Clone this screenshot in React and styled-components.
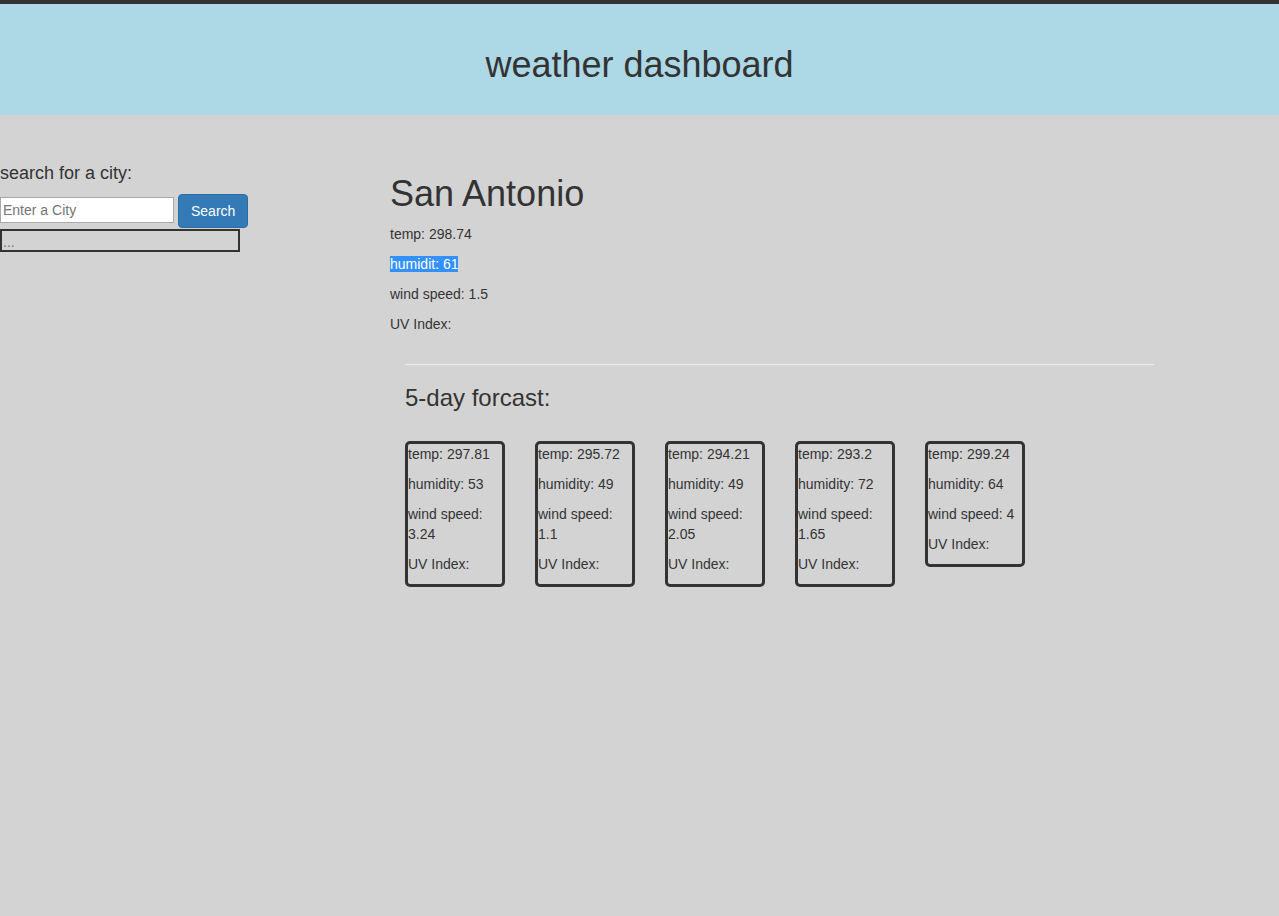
import React from "react";
import styled, { createGlobalStyle } from "styled-components";

const Global = createGlobalStyle`
  html, body { margin: 0; padding: 0; }
  body {
    background: #d3d3d3;
    color: #333;
    font-family: "Liberation Sans", Arial, sans-serif;
    font-size: 14px;
    line-height: 20px;
    border-top: 4px solid #333;
    min-height: 912px;
  }
  * { box-sizing: border-box; }
`;

const Header = styled.header`
  background: #add8e6;
  height: 111px;
  padding-top: 41px;
  text-align: center;
`;

const Title = styled.h1`
  margin: 0;
  font-size: 36px;
  font-weight: 500;
  line-height: 39.6px;
`;

const Main = styled.main`
  display: flex;
  align-items: flex-start;
  padding-top: 39px;
`;

const Sidebar = styled.aside`
  width: 390px;
  flex: none;
`;

const SearchLabel = styled.h4`
  margin: 10px 0 10px;
  font-size: 18px;
  font-weight: 500;
  line-height: 19.8px;
`;

const SearchRow = styled.form`
  display: flex;
  align-items: center;
  gap: 4px;
  height: 34px;
`;

const CityInput = styled.input`
  width: 174px;
  height: 26px;
  margin: 0 0 1px;
  padding: 1px 2px;
  border: 1px solid #a9a9a9;
  background: #fff;
  font-family: "Liberation Sans", Arial, sans-serif;
  font-size: 14px;
  color: #333;
  outline: none;
  &::placeholder { color: #757575; }
`;

const SearchButton = styled.button`
  height: 34px;
  padding: 6px 12px;
  border: 1px solid #2e6da4;
  border-radius: 4px;
  background: #337ab7;
  color: #fff;
  font-family: "Liberation Sans", Arial, sans-serif;
  font-size: 14px;
  line-height: 20px;
`;

const History = styled.div`
  width: 240px;
  height: 23px;
  margin-top: 1px;
  border: 2px solid #333;
  color: #777;
  font-size: 14px;
  line-height: 22px;
  padding-left: 1px;
`;

const Content = styled.section`
  width: 779px;
`;

const City = styled.h1`
  margin: 20px 0 10px;
  font-size: 36px;
  font-weight: 500;
  line-height: 39.6px;
`;

const Stat = styled.p`
  margin: 0 0 10px;
  line-height: 20px;
`;

const Selected = styled.span`
  background: #3390ff;
  color: #fff;
`;

const Forecast = styled.div`
  display: flow-root;
  padding: 0 15px;
`;

const Rule = styled.hr`
  margin: 20px 0;
  border: 0;
  border-top: 1px solid #eee;
`;

const ForecastTitle = styled.h3`
  margin: 20px 0 10px;
  font-size: 24px;
  font-weight: 500;
  line-height: 26.4px;
`;

const Cards = styled.div`
  display: flex;
  align-items: flex-start;
  gap: 30px;
  margin-top: 30px;
`;

const Card = styled.div`
  width: 100px;
  border: 3px solid #333;
  border-radius: 5px;
`;

const days = [
  { temp: "297.81", humidity: 53, wind: "3.24" },
  { temp: "295.72", humidity: 49, wind: "1.1" },
  { temp: "294.21", humidity: 49, wind: "2.05" },
  { temp: "293.2", humidity: 72, wind: "1.65" },
  { temp: "299.24", humidity: 64, wind: "4" },
];

export default function App() {
  return (
    <>
      <Global />
      <Header>
        <Title>weather dashboard</Title>
      </Header>
      <Main>
        <Sidebar>
          <SearchLabel>search for a city:</SearchLabel>
          <SearchRow onSubmit={(e) => e.preventDefault()}>
            <CityInput type="text" placeholder="Enter a City" />
            <SearchButton type="submit">Search</SearchButton>
          </SearchRow>
          <History>...</History>
        </Sidebar>
        <Content>
          <City>San Antonio</City>
          <Stat>temp: 298.74</Stat>
          <Stat>
            <Selected>humidit: 61</Selected>
          </Stat>
          <Stat>wind speed: 1.5</Stat>
          <Stat>UV Index:</Stat>
          <Forecast>
            <Rule />
            <ForecastTitle>5-day forcast:</ForecastTitle>
            <Cards>
              {days.map((d, i) => (
                <Card key={i}>
                  <Stat>temp: {d.temp}</Stat>
                  <Stat>humidity: {d.humidity}</Stat>
                  <Stat>wind speed: {d.wind}</Stat>
                  <Stat>UV Index:</Stat>
                </Card>
              ))}
            </Cards>
          </Forecast>
        </Content>
      </Main>
    </>
  );
}
